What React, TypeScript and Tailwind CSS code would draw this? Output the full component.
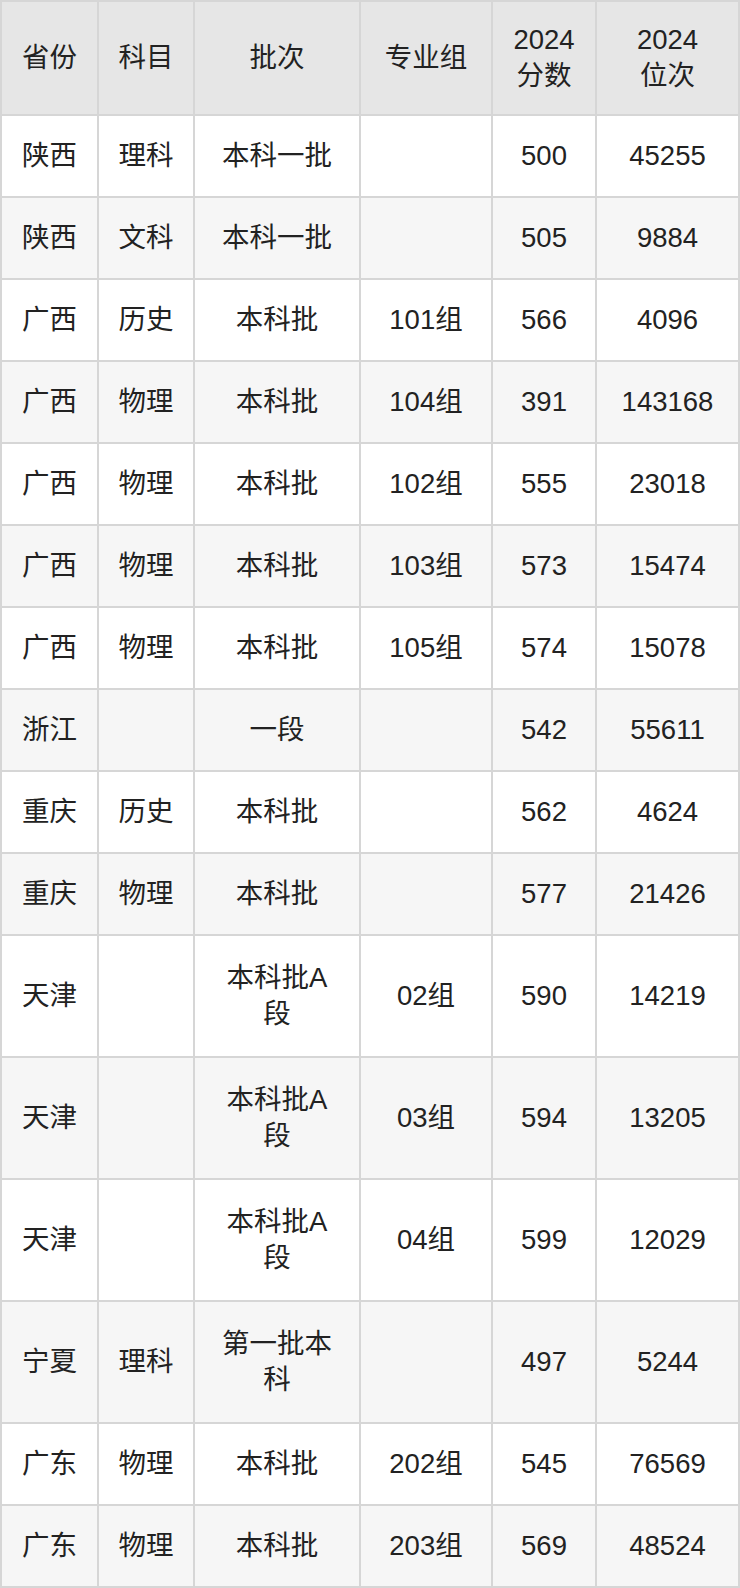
import type { JSX } from "react";

type Row = [string, string, string, string, string, string];

const header: Row = ["省份", "科目", "批次", "专业组", "2024\n分数", "2024\n位次"];

const rows: Row[] = [
  ["陕西", "理科", "本科一批", "", "500", "45255"],
  ["陕西", "文科", "本科一批", "", "505", "9884"],
  ["广西", "历史", "本科批", "101组", "566", "4096"],
  ["广西", "物理", "本科批", "104组", "391", "143168"],
  ["广西", "物理", "本科批", "102组", "555", "23018"],
  ["广西", "物理", "本科批", "103组", "573", "15474"],
  ["广西", "物理", "本科批", "105组", "574", "15078"],
  ["浙江", "", "一段", "", "542", "55611"],
  ["重庆", "历史", "本科批", "", "562", "4624"],
  ["重庆", "物理", "本科批", "", "577", "21426"],
  ["天津", "", "本科批A\n段", "02组", "590", "14219"],
  ["天津", "", "本科批A\n段", "03组", "594", "13205"],
  ["天津", "", "本科批A\n段", "04组", "599", "12029"],
  ["宁夏", "理科", "第一批本\n科", "", "497", "5244"],
  ["广东", "物理", "本科批", "202组", "545", "76569"],
  ["广东", "物理", "本科批", "203组", "569", "48524"],
];

function Cell({
  text,
  className,
}: {
  text: string;
  className: string;
}): JSX.Element {
  return (
    <div
      className={`flex items-center justify-center whitespace-pre-line text-center leading-[36px] ${className}`}
    >
      {text}
    </div>
  );
}

export default function App(): JSX.Element {
  return (
    <div
      className="w-[740px] bg-white text-[27.5px] text-[#222222]"
      style={{ fontFamily: '"Liberation Sans", "Noto Sans CJK SC", sans-serif' }}
    >
      <div className="grid grid-cols-[95px_94px_164px_130px_102px_141px] gap-[2px] bg-[#d6d6d6] p-[2px]">
        {header.map((text, i) => (
          <Cell key={`h${i}`} text={text} className="h-[112px] bg-[#e6e6e6]" />
        ))}
        {rows.map((row, r) => {
          const tall = row.some((t) => t.includes("\n"));
          const bg = r % 2 === 0 ? "bg-white" : "bg-[#f6f6f6]";
          return row.map((text, c) => (
            <Cell
              key={`${r}-${c}`}
              text={text}
              className={`${tall ? "h-[120px]" : "h-[80px]"} ${bg}`}
            />
          ));
        })}
      </div>
    </div>
  );
}
